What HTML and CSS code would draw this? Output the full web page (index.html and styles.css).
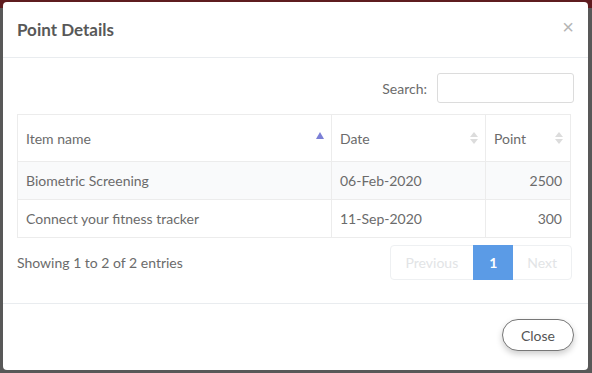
FILE: index.html
```html
<!DOCTYPE html>
<html lang="en">
<head>
    <meta charset="UTF-8">
    <meta name="viewport" content="width=device-width, initial-scale=1">
    <title>Point Details</title>
    <link rel="stylesheet" href="styles.css">
</head>
<body>
    <div class="backdrop">
        <div class="modal">
            <div class="modal-header">
                <h4 class="modal-title">Point Details</h4>
                <button class="close-x" type="button">&times;</button>
            </div>
            <div class="modal-body">
                <div class="filter">
                    <label>Search: <input type="search" class="search"></label>
                </div>
                <table class="points">
                    <thead>
                        <tr>
                            <th class="sort-asc col-name">Item name</th>
                            <th class="sortable col-date">Date</th>
                            <th class="sortable col-point">Point</th>
                        </tr>
                    </thead>
                    <tbody>
                        <tr class="odd">
                            <td>Biometric Screening</td>
                            <td>06-Feb-2020</td>
                            <td class="num">2500</td>
                        </tr>
                        <tr>
                            <td>Connect your fitness tracker</td>
                            <td>11-Sep-2020</td>
                            <td class="num">300</td>
                        </tr>
                    </tbody>
                </table>
                <div class="table-footer">
                    <div class="info">Showing 1 to 2 of 2 entries</div>
                    <ul class="pagination">
                        <li class="disabled">Previous</li>
                        <li class="active">1</li>
                        <li class="disabled">Next</li>
                    </ul>
                </div>
            </div>
            <div class="modal-footer">
                <button class="btn-close" type="button">Close</button>
            </div>
        </div>
    </div>
</body>
</html>
```

FILE: styles.css
```css
body {
    margin: 0;
    background-color: #585858;
    font-family: 'Lato', 'Liberation Sans', sans-serif;
    color: #6b6b6b;
}
.backdrop {
    height: 373px;
    box-sizing: border-box;
    padding: 2px 4px 3px 3px;
    background: linear-gradient(to bottom, #5e1c1f 0, #5e1c1f 8px, #585858 8px);
}
.modal {
    height: 100%;
    background-color: #fff;
    border-radius: 4px;
    display: flex;
    flex-direction: column;
}
.modal-header {
    height: 55px;
    display: flex;
    align-items: center;
    justify-content: space-between;
    padding: 0 14px 0 14px;
    border-bottom: 1px solid #e9ecef;
}
.modal-title {
    margin: 0;
    font-size: 17px;
    font-weight: bold;
    color: #585858;
}
.close-x {
    border: none;
    background: none;
    font-size: 20px;
    color: #b5b5b5;
    padding: 0;
    margin-top: -4px;
    cursor: pointer;
}
.modal-body {
    padding: 15px 16px 0 14px;
    height: 230px;
    border-bottom: 1px solid #e9ecef;
}
.filter {
    display: flex;
    justify-content: flex-end;
    margin-right: -2px;
    font-size: 14px;
}
.filter label {
    display: flex;
    align-items: center;
    gap: 10px;
}
.search {
    width: 137px;
    height: 30px;
    box-sizing: border-box;
    border: 1px solid #dcdcdc;
    border-radius: 3px;
}
.points {
    width: 554px;
    margin-top: 11px;
    border-collapse: collapse;
    font-size: 14px;
}
.points th, .points td {
    border: 1px solid #ececec;
    text-align: left;
    padding: 0 8px;
}
.points th {
    height: 46px;
    font-weight: normal;
    position: relative;
}
.points td {
    height: 37px;
}
.col-name { width: 297px; }
.col-date { width: 137px; }
.points .odd td {
    background-color: #f9fafb;
}
.points td.num {
    text-align: right;
}
.sort-asc::after {
    content: "";
    position: absolute;
    right: 7px;
    top: 17px;
    border-left: 4px solid transparent;
    border-right: 4px solid transparent;
    border-bottom: 7px solid #7b7fd6;
}
.sortable::before,
.sortable::after {
    content: "";
    position: absolute;
    right: 7px;
    border-left: 4px solid transparent;
    border-right: 4px solid transparent;
}
.sortable::before {
    top: 17px;
    border-bottom: 5px solid #dcdcdc;
}
.sortable::after {
    top: 24px;
    border-top: 5px solid #dcdcdc;
}
.table-footer {
    display: flex;
    justify-content: space-between;
    align-items: center;
    margin-top: 7px;
}
.info {
    font-size: 14px;
}
.pagination {
    display: flex;
    list-style: none;
    margin: 0;
    padding: 0;
    border: 1px solid #eef0f2;
    border-radius: 4px;
    height: 33px;
    font-size: 14px;
}
.pagination li {
    display: flex;
    align-items: center;
    justify-content: center;
}
.pagination .disabled {
    color: #e2e4e6;
    padding: 0 15px;
}
.pagination .disabled:last-child {
    padding: 0 14px;
}
.pagination .active {
    background-color: #5b9be6;
    color: #fff;
    width: 40px;
    margin: -1px 0;
    font-weight: bold;
}
.modal-footer {
    flex: 1;
    display: flex;
    justify-content: flex-end;
    align-items: flex-start;
    padding: 15px 14px 0;
}
.btn-close {
    font-family: inherit;
    font-size: 14px;
    color: #555;
    background-color: #fff;
    border: 1px solid #777;
    border-radius: 17px;
    width: 72px;
    height: 32px;
    box-shadow: 0 3px 6px rgba(0, 0, 0, 0.2);
    cursor: pointer;
}
```
